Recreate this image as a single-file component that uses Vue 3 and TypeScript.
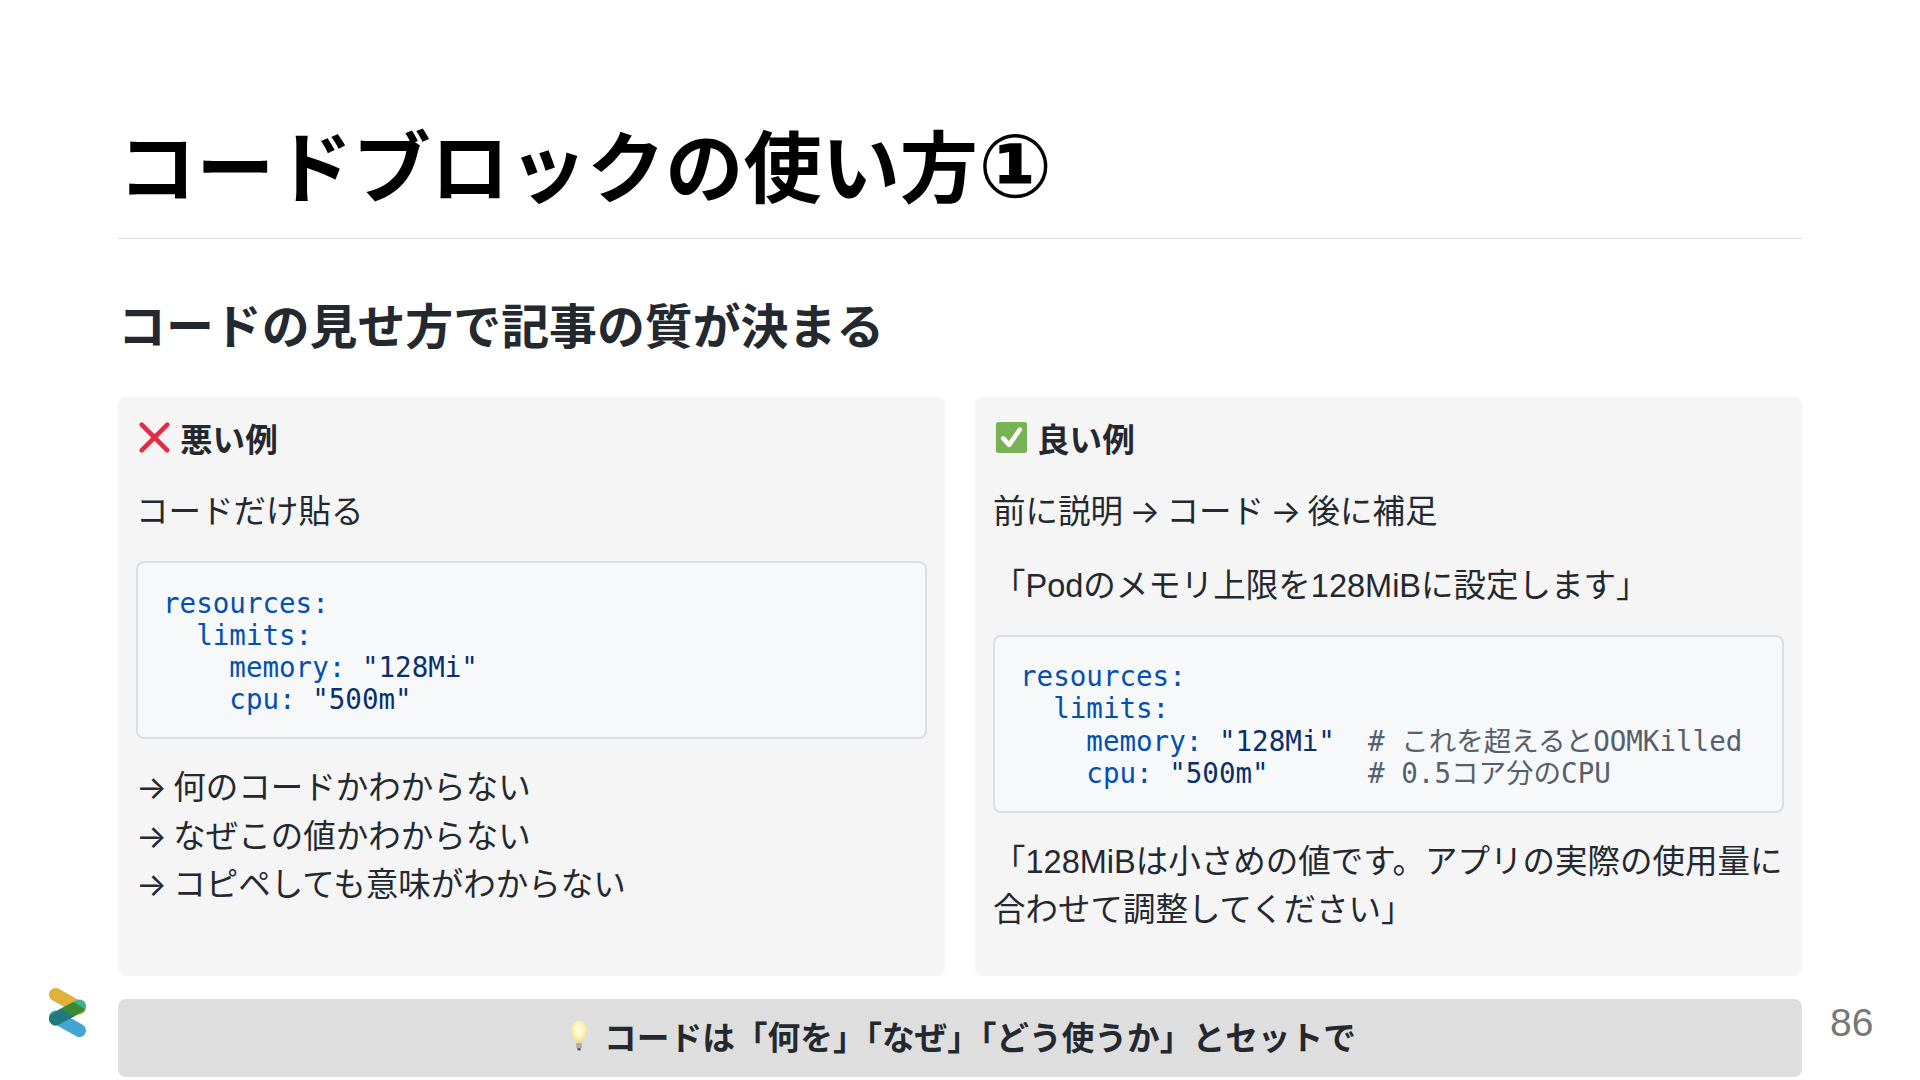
<script setup lang="ts">
const badNotes: string[] = [
  '何のコードかわからない',
  'なぜこの値かわからない',
  'コピペしても意味がわからない',
]
</script>

<template>
  <div class="slide">
    <header class="head">
      <h1>コードブロックの使い方<span class="circled">①</span></h1>
    </header>
    <h2>コードの見せ方で記事の質が決まる</h2>
    <div class="cols">
      <section class="card">
        <h3>
          <svg class="emo" viewBox="0 0 36 36"><path d="M4 4 L32 32 M32 4 L4 32" stroke="#dd2e44" stroke-width="5" stroke-linecap="round" /></svg>
          <span>悪い例</span>
        </h3>
        <p>コードだけ貼る</p>
        <pre class="code"><span class="k">resources:</span>
<span class="k">  limits:</span>
<span class="k">    memory:</span> <span class="s">"128Mi"</span>
<span class="k">    cpu:</span> <span class="s">"500m"</span></pre>
        <p class="notes"><template v-for="n in badNotes" :key="n"><span class="arr">→</span> {{ n }}<br /></template></p>
      </section>
      <section class="card">
        <h3>
          <svg class="emo" viewBox="0 0 36 36"><rect x="1" y="1" width="34" height="34" rx="3" fill="#77b255" /><path d="M9 19 L15.5 26 L27 9.5" fill="none" stroke="#fff" stroke-width="5" stroke-linecap="round" stroke-linejoin="round" /></svg>
          <span>良い例</span>
        </h3>
        <p>前に説明 <span class="arr">→</span> コード <span class="arr">→</span> 後に補足</p>
        <p class="next">「Podのメモリ上限を128MiBに設定します」</p>
        <pre class="code"><span class="k">resources:</span>
<span class="k">  limits:</span>
<span class="k">    memory:</span> <span class="s">"128Mi"</span>  <span class="c"># これを超えるとOOMKilled</span>
<span class="k">    cpu:</span> <span class="s">"500m"</span>      <span class="c"># 0.5コア分のCPU</span></pre>
        <p class="notes">「128MiBは小さめの値です。アプリの実際の使用量に合わせて調整してください」</p>
      </section>
    </div>
    <footer class="foot">
      <svg class="logo" viewBox="0 0 37 49">
        <defs>
          <clipPath id="clipYellow"><polygon points="-4,-4 44,26 30,36 -10,10" /></clipPath>
          <clipPath id="clipBlue"><polygon points="-4,32 10,20 46,40 30,60" /></clipPath>
        </defs>
        <line x1="6.5" y1="6.5" x2="30.5" y2="20" stroke="#e0b23c" stroke-width="13" stroke-linecap="round" />
        <line x1="6.5" y1="29" x2="30.5" y2="42.5" stroke="#41a6d2" stroke-width="13" stroke-linecap="round" />
        <line x1="30.5" y1="18" x2="6.5" y2="31" stroke="#41b08e" stroke-width="13" stroke-linecap="round" />
        <g clip-path="url(#clipYellow)"><line x1="30.5" y1="18" x2="6.5" y2="31" stroke="#3a8a34" stroke-width="13" stroke-linecap="round" /></g>
        <g clip-path="url(#clipBlue)"><line x1="30.5" y1="18" x2="6.5" y2="31" stroke="#1f7a82" stroke-width="13" stroke-linecap="round" /></g>
      </svg>
      <div class="tip">
        <svg class="bulb" viewBox="0 0 24 40">
          <defs>
            <radialGradient id="glow" cx="50%" cy="38%" r="60%">
              <stop offset="0%" stop-color="#fffff2" />
              <stop offset="55%" stop-color="#fdf3b8" />
              <stop offset="100%" stop-color="#f0d67e" />
            </radialGradient>
          </defs>
          <path d="M12 1 C5.5 1 2 6 2 11.5 C2 18 7.5 23 8.5 30 L15.5 30 C16.5 23 22 18 22 11.5 C22 6 18.5 1 12 1 Z" fill="url(#glow)" />
          <rect x="8.5" y="29" width="7" height="6" fill="#a8adb0" />
          <rect x="10" y="35" width="4" height="3" fill="#55595c" />
        </svg>
        <span>コードは「何を」「なぜ」「どう使うか」とセットで</span>
      </div>
      <div class="num">86</div>
    </footer>
  </div>
</template>

<style>
html, body { margin: 0; background: #fff; }
</style>

<style scoped>
.slide {
  width: 1920px;
  height: 1080px;
  box-sizing: border-box;
  display: flex;
  flex-direction: column;
  background: #fff;
  color: #24292f;
  font-family: "Liberation Sans", "Noto Sans CJK JP", sans-serif;
  overflow: hidden;
}
.head {
  height: 239px;
  margin: 0 118px;
  box-sizing: border-box;
  border-bottom: 1px solid #dcdcdc;
  display: flex;
  align-items: flex-end;
}
h1 {
  margin: 0 0 30px 0;
  font-family: "Noto Sans CJK JP", sans-serif;
  font-size: 78.2px;
  line-height: 90px;
  font-weight: 700;
  color: #000;
  white-space: nowrap;
}
.circled {
  font-family: "DejaVu Sans", sans-serif;
  font-size: 88px;
  line-height: 0;
}
h2 {
  margin: 0 118px;
  height: 158px;
  font-family: "Noto Sans CJK JP", sans-serif;
  font-size: 47.9px;
  line-height: 168px;
  font-weight: 700;
}
.cols {
  margin: 0 118px;
  display: grid;
  grid-template-columns: 827px 827px;
  column-gap: 30px;
  height: 579px;
}
.card {
  background: #f5f5f5;
  border-radius: 8px;
  padding: 18px;
  box-sizing: border-box;
}
h3 {
  margin: 0 0 29px;
  height: 44px;
  display: flex;
  align-items: center;
  gap: 9px;
  font-size: 32.6px;
  font-weight: 700;
}
.emo {
  width: 33px;
  height: 33px;
  margin-left: 2px;
}
p {
  margin: 0;
  font-size: 32.5px;
  line-height: 48.6px;
  word-spacing: -2.8px;
}
.arr {
  font-family: "Inter", sans-serif;
  line-height: 0;
}
.next {
  margin-top: 25px;
}
.code {
  margin: 24.5px 0 0;
  background: #f6f8fa;
  border: 2px solid #d8dee4;
  border-radius: 8px;
  padding: 23.5px 25px;
  font-family: "DejaVu Sans Mono", "Noto Sans CJK JP", monospace;
  font-size: 27.54px;
  line-height: 32.2px;
  color: #24292f;
  box-sizing: border-box;
  height: 178px;
  overflow: hidden;
}
.k { color: #0550ae; }
.s { color: #0a3069; }
.c { color: #57606a; }
.notes {
  margin-top: 25px;
}
.foot {
  margin-top: 23px;
  display: grid;
  grid-template-columns: 118px 1684px 118px;
  height: 78px;
}
.logo {
  width: 37px;
  height: 49px;
  margin: -11px 0 0 49px;
}
.tip {
  background: #dedede;
  border-radius: 8px;
  display: flex;
  align-items: center;
  justify-content: center;
  gap: 15px;
  padding: 0 0 5px 5px;
  box-sizing: border-box;
  font-size: 32.7px;
  font-weight: 700;
}
.bulb {
  width: 20px;
  height: 32px;
}
.num {
  font-size: 39px;
  line-height: 78px;
  color: #777;
  padding-left: 28px;
  margin-top: -15px;
}
</style>
